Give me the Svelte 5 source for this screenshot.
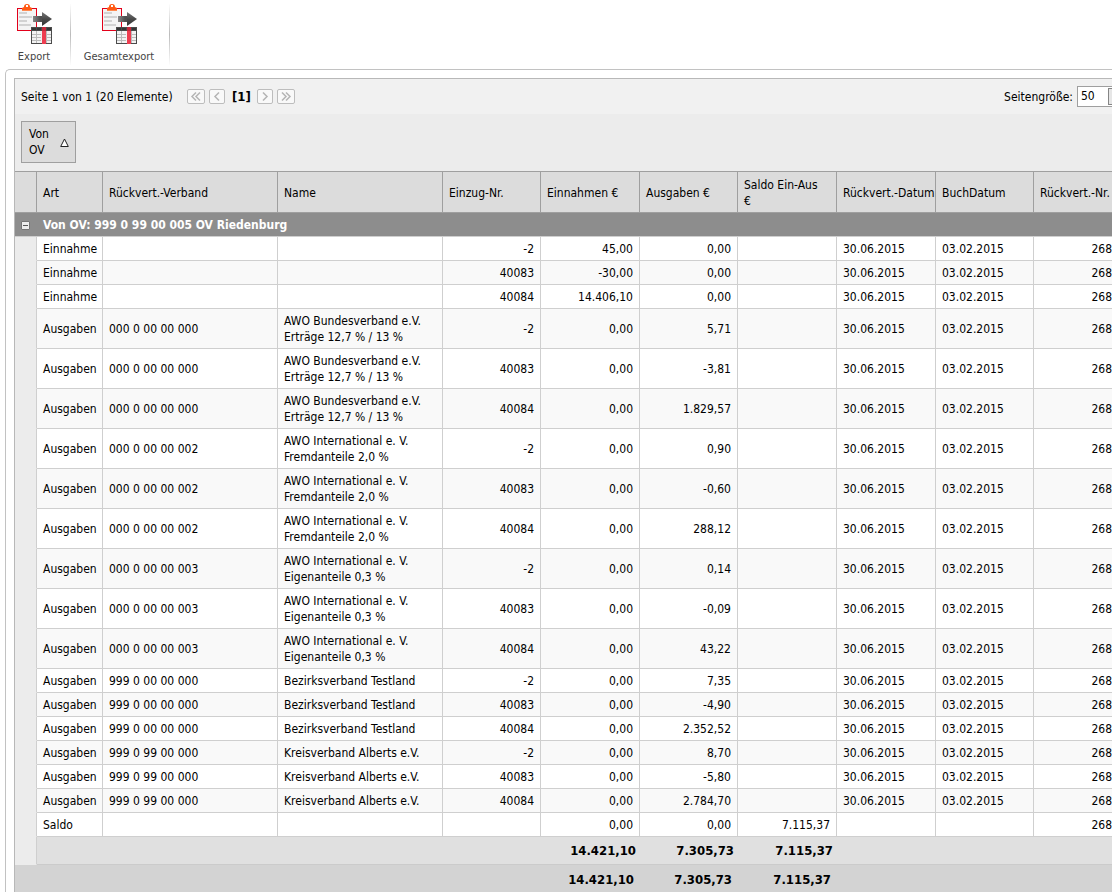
<script lang="ts">
  const headers = ['Art', 'Rückvert.-Verband', 'Name', 'Einzug-Nr.', 'Einnahmen €', 'Ausgaben €', 'Saldo Ein-Aus €', 'Rückvert.-Datum', 'BuchDatum', 'Rückvert.-Nr.'];
  const widths = [22, 66, 175, 165, 98, 99, 98, 99, 99, 98];
  const bund = 'AWO Bundesverband e.V. Erträge 12,7 % / 13 %';
  const fremd = 'AWO International e. V. Fremdanteile 2,0 %';
  const eigen = 'AWO International e. V. Eigenanteile 0,3 %';
  const bezirk = 'Bezirksverband Testland';
  const kreis = 'Kreisverband Alberts e.V.';
  const expense = (unit: string, name: string, no: string, value: string) =>
    ['Ausgaben', unit, name, no, '0,00', value, '', '30.06.2015', '03.02.2015', '268'];
  const income = (no: string, value: string) =>
    ['Einnahme', '', '', no, value, '0,00', '', '30.06.2015', '03.02.2015', '268'];
  const rows = [
    income('-2', '45,00'),
    income('40083', '-30,00'),
    income('40084', '14.406,10'),
    expense('000 0 00 00 000', bund, '-2', '5,71'),
    expense('000 0 00 00 000', bund, '40083', '-3,81'),
    expense('000 0 00 00 000', bund, '40084', '1.829,57'),
    expense('000 0 00 00 002', fremd, '-2', '0,90'),
    expense('000 0 00 00 002', fremd, '40083', '-0,60'),
    expense('000 0 00 00 002', fremd, '40084', '288,12'),
    expense('000 0 00 00 003', eigen, '-2', '0,14'),
    expense('000 0 00 00 003', eigen, '40083', '-0,09'),
    expense('000 0 00 00 003', eigen, '40084', '43,22'),
    expense('999 0 00 00 000', bezirk, '-2', '7,35'),
    expense('999 0 00 00 000', bezirk, '40083', '-4,90'),
    expense('999 0 00 00 000', bezirk, '40084', '2.352,52'),
    expense('999 0 99 00 000', kreis, '-2', '8,70'),
    expense('999 0 99 00 000', kreis, '40083', '-5,80'),
    expense('999 0 99 00 000', kreis, '40084', '2.784,70'),
    ['Saldo', '', '', '', '0,00', '0,00', '7.115,37', '', '', '268']
  ];
  const sums = ['14.421,10', '7.305,73', '7.115,37'];
  const isNumber = (i: number) => (i >= 3 && i <= 6) || i === 9;
  let open = $state(true);
</script>

{#snippet exportIcon()}
  <svg width="36" height="41" viewBox="0 0 36 41" aria-hidden="true">
    <defs>
      <linearGradient id="arrow" x1="0" y1="0" x2="0" y2="1">
        <stop offset="0" stop-color="#777" /><stop offset="0.5" stop-color="#4a4a4a" /><stop offset="1" stop-color="#333" />
      </linearGradient>
      <linearGradient id="shaft" x1="0" y1="0" x2="1" y2="0">
        <stop offset="0" stop-color="#888" /><stop offset="0.7" stop-color="#505050" />
      </linearGradient>
    </defs>
    <rect x="1.500" y="4.500" width="19" height="22" fill="#f4f4f4" stroke="#e2001a" />
    <path d="M3 8h8v2H3zM3 12h13v2H3zM3 16h8v2H3zM3 20h12v2H3z" fill="#d2d2d2" />
    <path d="M6 7V4l2-1q0-3 3-3t3 3l2 1v3z" fill="#ff5a14" />
    <rect x="10" y="1" width="2" height="2" fill="#fff" />
    <path d="M6 6h10v1H6z" fill="#ff8a50" />
    <rect x="17" y="12" width="10" height="6" fill="url(#shaft)" />
    <path d="M26 8l10 7-10 7z" fill="url(#arrow)" />
    <rect x="15" y="23" width="21" height="17" fill="#4b4b4b" />
    <path d="M16 27h19v12H16z" fill="#f3f3f3" />
    <path d="M20 27h1v12h-1zM30 27h1v12h-1zM16 30h9v1h-9zM16 33h9v1h-9zM16 36h9v1h-9zM31 30h4v1h-4zM31 33h4v1h-4zM31 36h4v1h-4z" fill="#bbb" />
    <path d="M16 24h4v2h-4zM21 24h4v2h-4zM31 24h4v2h-4z" fill="#353535" />
    <path d="M26 23h4v4h-4z" fill="#c5283a" />
    <path d="M26 27h4v13h-4z" fill="#ee3d50" />
  </svg>
{/snippet}

{#snippet chevron(d: string)}
  <svg width="16" height="13" viewBox="0 0 16 13" aria-hidden="true"><path {d} fill="none" stroke="#b4b4b4" stroke-width="1.500" /></svg>
{/snippet}

<div class="page">
  <nav class="toolbar">
    <button class="tool">{@render exportIcon()}<span>Export</span></button>
    <button class="tool wide">{@render exportIcon()}<span>Gesamtexport</span></button>
  </nav>
  <main class="panel">
    <div class="grid">
      <div class="pager">
        <span class="info">Seite 1 von 1 (20 Elemente)</span>
        <button class="nav end" aria-label="Erste Seite" disabled>{@render chevron('M8 2.500L4 6.500l4 4M12 2.500L8 6.500l4 4')}</button>
        <button class="nav" aria-label="Vorherige Seite" disabled>{@render chevron('M10 2.500L6 6.500l4 4')}</button>
        <b>[1]</b>
        <button class="nav" aria-label="Nächste Seite" disabled>{@render chevron('M6 2.500l4 4-4 4')}</button>
        <button class="nav end" aria-label="Letzte Seite" disabled>{@render chevron('M4 2.500l4 4-4 4M8 2.500l4 4-4 4')}</button>
        <label for="size">Seitengröße:</label>
        <div class="combo">
          <select id="size"><option>50</option></select>
          <span class="drop"></span>
        </div>
      </div>
      <div class="grouping">
        <button class="group-key">
          <span>Von OV</span>
          <svg width="9" height="9" viewBox="0 0 9 9" aria-hidden="true"><path d="M4.500 1L8.300 8.500H.7z" fill="#fff" stroke="#222" /></svg>
        </button>
      </div>
      <table>
        <colgroup>
          {#each widths as w}<col style="width: {w}px" />{/each}
          <col />
        </colgroup>
        <thead>
          <tr>
            <th></th>
            {#each headers as h}<th scope="col">{h}</th>{/each}
          </tr>
        </thead>
        <tbody>
          <tr class="group">
            <td>
              <button class="toggle" aria-label="Gruppe umschalten" aria-expanded={open} onclick={() => (open = !open)}></button>
            </td>
            <td colspan="10">Von OV: 999 0 99 00 005 OV Riedenburg</td>
          </tr>
          {#if open}
            {#each rows as row, r}
              <tr class="data" class:alt={r % 2 === 1}>
                <td class="indent"></td>
                {#each row as cell, i}<td class:num={isNumber(i)}>{cell}</td>{/each}
              </tr>
            {/each}
          {/if}
          <tr class="sum">
            <td class="indent"></td>
            <td colspan="4"></td>
            {#each sums as s}<td class="num">{s}</td>{/each}
            <td colspan="3"></td>
          </tr>
        </tbody>
        <tfoot>
          <tr class="total">
            <td colspan="5"></td>
            {#each sums as s}<td class="num">{s}</td>{/each}
            <td colspan="3"></td>
          </tr>
        </tfoot>
      </table>
    </div>
  </main>
</div>

<style>
  :global(body) {
    margin: 0;
    background: #fff;
  }
  .page {
    overflow: hidden;
    font: 12px/16px Tahoma, "DejaVu Sans Condensed", "Noto Sans", sans-serif;
    color: #000;
  }
  button {
    font: inherit;
    color: inherit;
    padding: 0;
    box-sizing: border-box;
  }
  .toolbar {
    display: flex;
    padding: 4px 0;
  }
  .tool {
    display: flex;
    flex-direction: column;
    align-items: center;
    gap: 4px;
    width: 71px;
    height: 61px;
    padding-right: 2px;
    border: 0;
    border-right: 1px solid;
    border-image: linear-gradient(#fff, #bbb 50%, #fff) 1;
    background: none;
    font-size: 11px;
    color: #444;
  }
  .tool svg {
    flex: none;
  }
  .wide {
    width: 99px;
  }
  .panel {
    margin-left: 5px;
    padding: 8px 0 0 8px;
    border: 1px solid #c2c2c2;
    border-width: 1px 0 0 1px;
    border-radius: 5px 0 0 0;
  }
  .grid {
    border: 1px solid #b8b8b8;
    border-width: 1px 0 0 1px;
  }
  .pager {
    display: flex;
    align-items: center;
    height: 35px;
    padding-left: 6px;
    background: #f1f1f1;
  }
  .info {
    min-width: 158px;
    margin-right: 8px;
  }
  .nav {
    display: flex;
    justify-content: center;
    width: 16px;
    height: 15px;
    margin-right: 4px;
    border: 1px solid #bdbdbd;
    border-radius: 2px;
    background: #f9f9f9;
  }
  .nav svg {
    flex: none;
  }
  .nav.end {
    width: 18px;
  }
  .pager b {
    margin: 0 6px 0 3px;
    font-size: 13px;
  }
  .pager label {
    margin-left: auto;
    margin-right: 4px;
  }
  .combo {
    display: flex;
    align-items: center;
    width: 53px;
    height: 21px;
    margin-right: -18px;
    box-sizing: border-box;
    border: 1px solid #9f9f9f;
    background: #fff;
  }
  .combo select {
    appearance: none;
    width: 30px;
    padding: 0 0 2px 3px;
    border: 0;
    background: none;
    font: inherit;
    color: inherit;
  }
  .drop {
    width: 17px;
    height: 17px;
    box-sizing: border-box;
    border: 1px solid #858585;
    background: #e6e6e6;
  }
  .grouping {
    padding: 7px 6px 8px;
    background: #ececec;
  }
  .group-key {
    display: flex;
    align-items: center;
    justify-content: space-between;
    width: 55px;
    height: 42px;
    padding: 0 6px 0 7px;
    border: 1px solid #9f9f9f;
    background: #dcdcdc;
    text-align: left;
  }
  .group-key span {
    width: 24px;
  }
  table {
    width: 100%;
    table-layout: fixed;
    border-collapse: separate;
    border-spacing: 0;
  }
  th, td {
    box-sizing: border-box;
    padding: 4px 6px 3px;
    text-align: left;
    vertical-align: middle;
  }
  th {
    height: 42px;
    padding: 4px 0 3px 6px;
    border: 1px solid #9f9f9f;
    border-left: 0;
    background: #dcdcdc;
    font-weight: normal;
    overflow: hidden;
  }
  th:nth-child(8) {
    padding-right: 16px;
  }
  th:last-child {
    border-right: 0;
    white-space: nowrap;
  }
  .group td {
    height: 24px;
    border-bottom: 1px solid #cfcfcf;
    background: #8d8d8d;
    color: #fff;
    font-weight: bold;
  }
  .toggle {
    display: flex;
    align-items: center;
    justify-content: center;
    width: 9px;
    height: 9px;
    border: 1px solid #757575;
    border-radius: 1px;
    background: #ececec;
  }
  .toggle::before {
    content: "";
    width: 5px;
    height: 1px;
    background: #555;
  }
  .data td {
    height: 24px;
    border: 1px solid #cfcfcf;
    border-width: 0 1px 1px 0;
  }
  .alt td {
    background: #f9f9f9;
  }
  td.num {
    text-align: right;
  }
  .data td:last-child {
    padding-right: 0;
    border-right: 0;
  }
  .data .indent, .sum .indent {
    border-right: 1px solid #cfcfcf;
    border-bottom-color: #ececec;
    background: #ececec;
  }
  .sum td, .total td {
    height: 28px;
    font-size: 13px;
    font-weight: bold;
  }
  .sum td {
    padding-right: 4px;
    border-bottom: 1px solid #cbcbcb;
    background: #e0e0e0;
  }
  .total td {
    padding-right: 6px;
    background: #d3d3d3;
  }
</style>
